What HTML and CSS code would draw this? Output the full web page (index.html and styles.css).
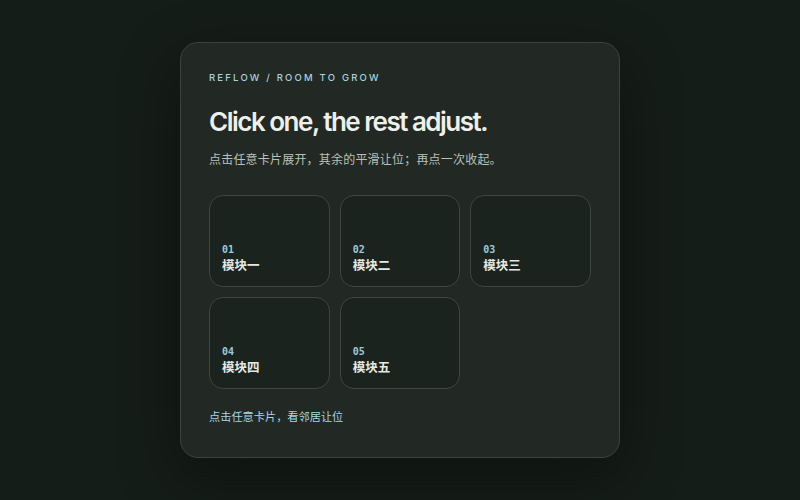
FILE: index.html
```html
<!DOCTYPE html>
<html lang="zh">
<head>
<meta charset="utf-8">
<link rel="stylesheet" href="styles.css">
</head>
<body>
<main class="panel">
  <div class="eyebrow">REFLOW / ROOM TO GROW</div>
  <h1 class="title">Click one, the rest adjust.</h1>
  <p class="lead">点击任意卡片展开，其余的平滑让位；再点一次收起。</p>
  <div class="grid">
    <div class="tile"><span class="num">01</span><span class="name">模块一</span></div>
    <div class="tile"><span class="num">02</span><span class="name">模块二</span></div>
    <div class="tile"><span class="num">03</span><span class="name">模块三</span></div>
    <div class="tile"><span class="num">04</span><span class="name">模块四</span></div>
    <div class="tile"><span class="num">05</span><span class="name">模块五</span></div>
  </div>
  <p class="hint">点击任意卡片，看邻居让位</p>
</main>
</body>
</html>
```
FILE: styles.css
```css
* { box-sizing: border-box; }
html, body { margin: 0; height: 100%; }
body {
  background: #151d18;
  display: flex;
  align-items: center;
  justify-content: center;
  font-family: Inter, "Noto Sans CJK SC", sans-serif;
}
.panel {
  width: 440px;
  height: 416px;
  padding: 29px 28px 28px;
  background: #222924;
  border: 1px solid #3a443c;
  border-radius: 18px;
  box-shadow: 0 20px 60px rgba(0,0,0,0.35);
}
.eyebrow {
  font-size: 9.5px;
  letter-spacing: 2.2px;
  color: #a6d2de;
  line-height: 12px;
  font-weight: 500;
}
.title {
  margin: 22px 0 0;
  font-size: 26px;
  line-height: 31px;
  font-weight: 600;
  letter-spacing: -1.5px;
  color: #eef0ea;
}
.lead {
  margin: 13px 0 0;
  font-size: 12px;
  line-height: 18px;
  letter-spacing: 0.2px;
  color: #b9c0b8;
  font-family: "Noto Sans CJK SC", sans-serif;
}
.grid {
  margin-top: 27px;
  display: grid;
  grid-template-columns: repeat(3, 1fr);
  gap: 10px;
}
.tile {
  height: 92px;
  border: 1px solid #3c463e;
  border-radius: 14px;
  background: #1b231e;
  padding: 0 12px 13px;
  display: flex;
  flex-direction: column;
  justify-content: flex-end;
}
.num {
  font-family: "DejaVu Sans Mono", monospace;
  font-size: 10px;
  line-height: 14px;
  font-weight: 600;
  color: #9ccbdc;
}
.name {
  font-family: "Noto Sans CJK SC", sans-serif;
  font-size: 12.5px;
  line-height: 16px;
  font-weight: 700;
  color: #e6e9e2;
}
.hint {
  margin: 19px 0 0;
  font-size: 11.2px;
  line-height: 16px;
  color: #a6d6e4;
  font-family: "Noto Sans CJK SC", sans-serif;
}
```
